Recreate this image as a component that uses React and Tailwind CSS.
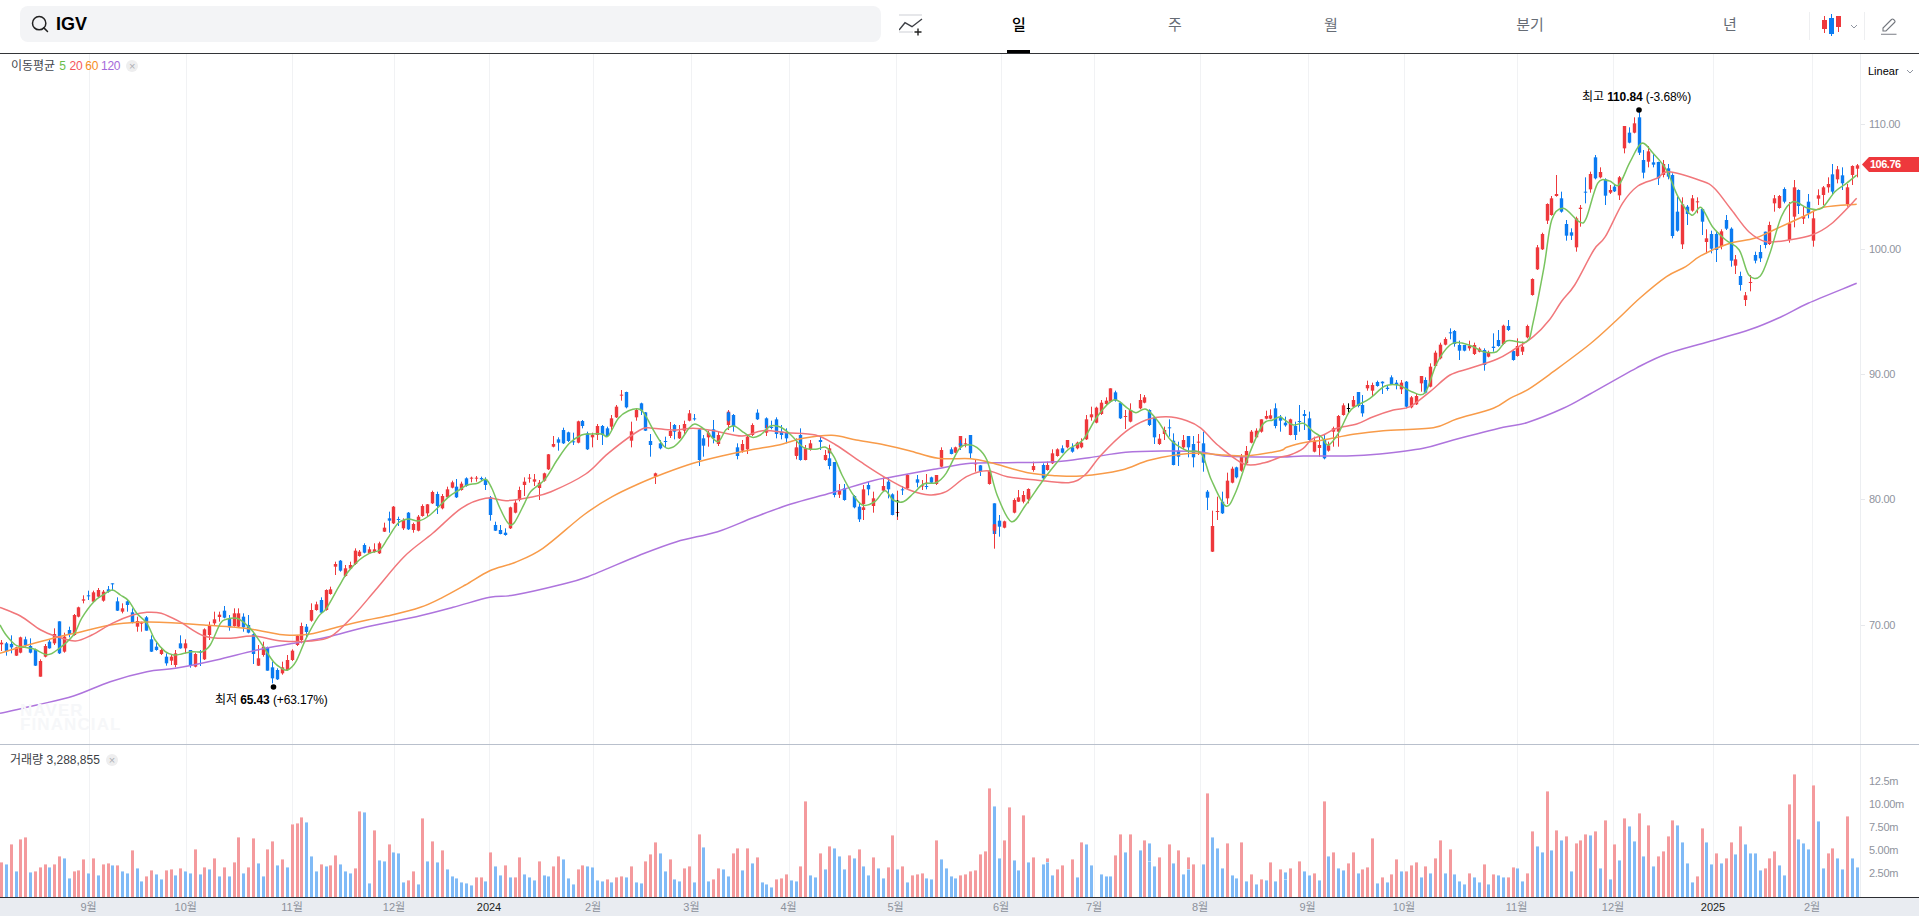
import { Search } from "lucide-react";

const PITCH = 4.845;
const LAST_X = 1856.6;
// snap a read x onto the candle grid
const snap = (x) => Math.round(LAST_X - PITCH * Math.round((LAST_X - x) / PITCH));

// [x, wickTop, bodyTop, bodyBottom, wickBottom, color] color: 1 red, 0 blue, 2 black
const CANDLES = [
  { x0: 0, sx: 2.45, y0: 360, rows: [
    [3,840,848,853,873,1],[15,846,850,874,887,0],[27,826,852,862,880,0],[38,860,862,887,888,1],[50,830,832,878,880,1],[62,830,838,855,860,0],[74,835,858,878,880,0],[86,866,870,917,918,0],[99,898,903,950,950,1],[111,852,858,890,892,1],[122,838,845,865,866,0],[133,805,822,850,855,1],[145,784,784,880,882,0],[157,818,830,875,878,1],[170,800,810,822,832,0],[182,762,765,825,827,1],[194,740,742,770,772,1],[205,706,718,722,730,1],[217,692,706,709,720,0],[229,692,697,725,726,1],[241,684,690,710,712,1],[253,690,695,722,725,1],[265,678,688,695,698,0],[277,670,670,673,692,0],[288,712,724,752,753,0],[300,730,745,755,760,1],[312,720,724,735,755,0],[324,745,757,788,790,0],[337,770,783,800,815,1],[349,785,788,790,815,1],[361,768,772,812,812,0],[371,826,838,875,876,0],[383,848,860,870,872,0],[395,865,870,882,885,1],[407,880,890,910,917,0],[420,885,890,902,915,1],[432,870,880,915,922,1],[444,826,850,865,866,0],[455,838,850,865,880,1],[467,870,870,915,923,0],[479,878,882,920,922,1],[491,870,875,878,918,0],[503,805,808,898,900,1],[515,785,795,825,840,1],[527,755,778,790,795,1],[538,755,764,771,785,1],[550,738,752,773,775,0],[562,765,775,802,812,0],[574,745,760,798,800,1],[586,745,760,800,802,1],[598,760,770,802,815,0],[610,765,795,818,820,0],[621,820,823,882,912,0],[633,855,895,917,918,1],[645,845,860,885,890,1],[657,860,862,932,932,0],[670,905,922,955,970,0],[682,925,930,958,960,0],[694,905,922,940,944,1],[704,885,900,930,932,1],[716,868,872,900,903,1],[729,825,828,855,858,1],[741,788,798,840,850,1],[753,792,800,816,832,0],[765,730,750,782,785,1],[777,725,733,750,752,1],[787,712,720,758,760,0],[799,688,690,750,752,1],[811,680,688,702,704,1],[824,605,612,620,645,1],[836,600,602,632,635,0],[849,615,625,648,650,1],[860,605,615,626,628,1],[871,565,572,612,615,1],[883,570,575,588,590,1],[895,550,555,578,580,0],[907,560,568,580,582,1],[919,550,568,576,578,1],[932,545,550,580,582,1],[944,488,503,515,516,1],[954,455,475,482,518,0],[966,438,440,490,492,1],[978,470,477,480,498,0],[990,475,480,505,510,1],[1003,456,458,508,510,0],[1015,488,492,510,518,1],[1027,465,470,512,514,1],[1037,433,438,468,470,1],[1050,432,433,460,470,1],[1062,392,396,430,432,1],[1074,395,402,438,462,0],[1086,402,408,445,448,1],[1098,380,388,412,415,1],[1110,362,367,383,385,1],[1120,357,380,412,414,0],[1133,365,371,390,392,1],[1145,352,355,378,380,0],[1157,350,353,356,367,1],[1170,348,353,356,365,1],[1182,350,354,358,362,0],[1194,352,358,375,390,0],[1204,408,412,465,482,0],[1216,485,495,512,513,0],[1229,495,510,522,523,0],[1241,505,518,525,527,0],[1253,440,442,505,507,1],[1265,420,428,458,460,1],[1277,380,390,420,424,1],[1287,352,365,375,408,1],[1299,342,353,356,368,1],[1312,342,358,365,378,1],[1324,360,368,384,420,1],[1336,338,340,362,365,1],[1348,282,283,328,330,1],[1360,228,252,260,262,1],[1370,232,238,248,272,0],[1383,203,210,250,252,0],[1395,215,217,243,246,0],[1407,218,244,247,255,0],[1419,182,184,248,250,1],[1431,180,183,198,205,0],[1443,215,220,268,270,0],[1454,218,225,232,262,1],[1466,192,198,225,240,1],[1478,195,198,225,255,0],[1490,200,205,228,230,0],[1502,165,175,200,210,1],[1514,135,140,172,174,1],[1527,90,104,107,122,1],[1537,95,96,142,145,0],[1550,185,214,242,262,1],[1562,145,150,172,182,1],
  ] },
  { x0: 640, sx: 2.45, y0: 360, rows: [
    [5,128,130,152,165,0],[17,156,157,212,213,0],[30,222,243,255,290,0],[42,338,340,350,372,1],[53,240,250,265,268,0],[65,230,243,246,262,0],[77,186,213,228,234,1],[89,192,195,215,238,0],[101,195,215,235,237,1],[113,182,192,212,222,1],[125,150,160,182,184,1],[136,162,175,178,182,0],[148,205,208,300,318,0],[160,225,235,257,290,0],[172,212,218,232,260,1],[185,180,208,235,250,0],[197,215,225,252,258,1],[209,150,155,195,210,1],[219,155,158,182,185,0],[231,162,165,198,215,0],[243,250,262,288,298,0],[256,240,252,272,278,1],[268,225,230,268,282,1],[280,190,195,225,228,1],[292,148,158,178,180,0],[304,172,175,205,212,0],[314,195,208,218,228,1],[327,182,201,204,208,0],[339,172,178,222,235,0],[351,195,215,225,238,0],[363,205,218,235,250,0],[376,262,265,288,298,1],[386,235,262,285,288,1],[398,205,225,300,302,0],[410,255,265,300,301,1],[422,240,250,268,272,1],[435,228,240,246,270,0],[447,270,285,300,302,1],[459,254,265,280,290,1],[469,278,295,318,328,0],[481,306,306,405,412,0],[493,372,392,404,414,1],[505,372,385,420,422,0],[518,405,408,442,445,0],[530,430,440,478,486,0],[542,430,442,450,480,1],[552,375,388,432,434,1],[564,365,375,388,406,0],[576,395,415,438,458,1],[589,352,378,392,395,1],[601,352,365,388,415,0],[613,400,403,465,466,0],[625,392,456,458,480,1],[636,420,422,426,470,2],[648,378,388,390,405,0],[660,342,345,385,388,1],[672,345,358,368,382,0],[685,360,376,378,390,1],[697,368,378,380,388,0],[707,342,368,371,372,1],[719,350,352,368,370,0],[731,345,345,372,375,1],[743,262,270,320,322,1],[755,262,268,282,283,0],[768,260,262,278,279,1],[780,228,228,262,265,1],[790,240,250,256,270,0],[802,235,250,252,262,1],[814,225,225,280,295,0],[826,298,310,312,335,1],[838,315,316,335,348,0],[851,330,332,372,374,1],[863,430,430,522,526,0],[873,492,493,512,566,1],[885,465,482,500,530,0],[897,482,484,503,505,1],[910,415,420,458,460,1],[922,390,412,425,426,1],[934,393,405,425,430,1],[946,392,397,418,420,1],[956,385,387,415,430,1],[968,305,318,330,335,1],[981,310,315,355,358,0],[993,305,315,330,332,1],[1005,268,280,310,312,1],[1017,265,268,288,290,1],[1030,256,265,278,280,0],[1040,240,240,262,265,1],[1052,250,262,275,278,0],[1064,245,248,265,268,1],[1076,235,248,262,265,1],[1089,165,178,238,240,1],[1101,140,163,172,182,1],[1113,140,143,188,190,1],[1123,120,128,162,165,1],[1135,112,122,132,135,1],[1147,85,85,125,127,1],[1160,92,97,122,125,0],[1172,125,128,175,177,0],[1184,150,168,170,207,1],[1196,135,158,182,185,0],[1206,130,150,185,187,1],[1218,102,120,145,148,1],[1231,105,112,128,130,1],[1243,148,150,195,198,0],[1256,170,172,232,252,0],[1268,222,236,252,255,1],[1280,200,210,222,240,1],[1290,178,202,205,230,0],[1302,220,242,315,316,0],[1314,245,272,290,318,0],[1327,225,240,262,268,1],[1339,228,228,262,292,0],[1351,228,252,292,322,0],[1363,222,245,248,285,1],[1373,215,250,308,335,0],[1385,390,395,413,450,0],[1397,452,498,575,576,1],[1410,410,453,456,480,1],[1422,395,425,460,462,0],[1434,338,362,415,432,1],[1446,320,326,368,370,1],[1457,320,322,352,355,0],[1469,282,290,332,335,1],[1481,258,273,310,315,1],[1493,210,215,248,250,1],[1505,205,212,232,234,1],[1517,178,178,215,218,1],[1530,152,168,176,178,1],[1540,148,166,176,178,1],[1552,130,145,198,205,0],[1564,165,172,182,215,0],
  ] },
  { x0: 1270, sx: 3, y0: 320, rows: [
    [40,290,308,316,320,0],[55,296,298,345,346,1],[70,305,318,345,360,0],[85,255,303,305,335,0],[98,270,282,288,330,0],[113,275,295,360,362,0],[127,350,362,395,397,1],[142,350,375,384,410,1],[157,345,358,415,418,0],[172,365,376,392,395,1],[187,320,325,335,380,1],[199,285,288,335,380,1],[214,250,256,285,287,1],[229,250,264,266,280,2],[244,228,240,260,262,1],[259,216,216,258,262,0],[274,225,255,280,290,0],[289,182,195,205,212,1],[301,188,195,212,228,1],[316,182,186,198,200,0],[331,184,185,190,222,0],[346,195,203,207,212,0],[361,166,172,192,195,0],[376,180,188,195,208,0],[391,180,188,208,222,1],[403,183,185,260,265,0],[418,228,232,262,265,1],[433,222,228,253,255,1],[448,168,168,190,215,1],[463,172,180,218,220,0],[478,130,140,200,202,1],[493,92,98,138,140,1],[505,68,74,115,118,1],[520,52,57,74,76,1],[535,25,37,40,58,0],[550,30,33,72,80,0],[565,62,75,92,120,0],[580,75,75,92,94,0],[595,62,78,85,92,1],[607,68,75,102,105,1],[622,82,86,95,97,1],[637,85,90,135,152,0],[652,92,98,110,112,1],[667,40,80,84,95,0],[682,30,60,78,80,0],[697,14,17,72,75,1],[709,0,18,30,33,0],[724,88,93,120,122,0],[739,55,78,108,110,1],[754,65,80,95,105,1],[769,14,18,52,55,1],
  ] },
  { x0: 1280, sx: 2.613, y0: 90, rows: [
    [657,565,567,615,617,1],[670,465,472,538,540,1],[681,428,432,478,480,1],[694,340,342,392,402,1],[707,318,325,375,377,1],[719,255,312,318,320,1],[733,305,325,365,368,0],[746,390,402,437,452,0],[759,415,427,437,450,0],[770,380,385,472,485,1],[783,345,353,357,410,1],[796,262,305,308,340,0],[809,245,252,298,308,1],[821,195,202,265,268,0],[834,232,246,262,265,1],[847,265,268,317,345,0],[858,285,300,308,312,1],[871,285,290,304,306,0],[885,258,262,316,330,1],[897,108,108,175,190,1],[911,112,128,158,160,0],[924,82,100,128,130,1],[937,55,82,188,195,0],[947,180,210,248,265,0],[960,168,184,215,232,1],[973,192,217,224,232,0],[986,215,216,265,285,0],[999,210,222,255,262,1],[1012,222,235,260,268,0],[1025,250,255,438,445,0],[1036,320,365,422,425,0],[1049,322,343,463,477,1],[1062,345,350,372,405,0],[1075,315,325,362,365,1],[1088,322,334,336,370,1],[1101,355,357,395,435,0],[1115,418,445,456,490,1],[1126,422,432,476,490,0],[1138,425,432,480,516,0],[1151,418,424,468,478,1],[1164,375,390,416,420,0],[1177,412,416,512,530,0],[1190,495,508,527,552,1],[1203,545,558,585,602,0],[1215,606,616,630,648,1],[1226,555,576,578,604,1],[1240,485,495,512,520,0],[1253,465,486,505,516,0],[1266,425,425,465,475,0],[1279,395,405,462,465,1],[1291,315,325,340,365,1],[1304,315,318,354,356,1],[1316,292,297,335,340,0],[1329,336,400,450,458,1],[1342,270,292,380,412,1],[1355,298,300,348,372,0],[1368,350,378,386,402,1],[1381,312,335,370,385,0],[1392,362,385,452,470,1],[1405,298,316,326,345,1],[1418,288,292,315,345,1],[1431,262,282,292,308,1],[1444,222,253,305,312,0],[1457,228,238,268,280,1],[1470,232,256,280,300,0],[1480,282,292,342,350,1],[1494,226,228,255,285,1],[1507,222,226,236,262,1],
  ] },
];

// [x, top, color] read off the volume pane, y = 580 + top / 3
const VOLUME = [
  { x0: 0, rows: [
    [0,845,1],[13,853,0],[25,793,1],[37,874,0],[50,778,1],[62,772,1],[74,877,0],[84,874,1],[96,862,1],[109,853,1],[121,862,0],[133,853,1],[145,829,1],[157,835,0],[168,895,0],[180,874,1],[192,871,1],[204,838,1],[216,880,0],[229,835,1],[241,886,0],[252,853,1],[264,850,1],[276,856,0],[288,856,1],[300,874,0],[312,880,0],[324,811,1],[335,865,0],[347,904,0],[359,889,1],[371,871,1],[383,883,0],[395,898,0],[407,871,1],[418,868,1],[430,886,0],[442,865,1],[454,874,0],[466,880,0],[479,808,1],[491,883,0],[501,862,1],[513,868,0],[525,835,1],[537,889,0],[550,862,1],[561,889,0],[574,847,1],[584,772,1],[596,880,0],[608,862,1],[620,775,1],[633,850,0],[645,889,0],[657,808,1],[668,784,1],[680,856,0],[692,838,1],[704,862,0],[717,733,1],[729,730,1],[741,712,1],[751,727,0],[763,829,0],[775,874,0],[787,853,1],[799,859,0],[811,856,1],[823,826,1],[835,853,0],[847,874,0],[858,880,0],[871,865,1],[884,694,1],[895,697,0],[907,910,0],[917,751,1],[929,841,0],[941,844,0],[954,793,1],[966,817,0],[978,820,0],[990,907,0],[1001,901,1],[1013,874,1],[1025,913,0],[1037,715,1],[1050,844,0],[1062,784,1],[1074,847,0],[1084,811,1],[1096,868,0],[1108,889,0],[1120,895,0],[1132,907,0],[1145,910,0],[1157,916,0],[1168,892,1],[1180,892,1],[1192,904,0],[1204,817,1],[1216,859,0],[1229,886,0],[1241,856,1],[1251,892,0],[1263,892,1],[1276,832,1],[1288,883,0],[1300,892,0],[1312,901,0],[1324,844,1],[1334,886,0],[1346,889,0],[1358,859,1],[1370,829,1],[1383,838,0],[1395,895,0],[1407,913,0],[1418,868,1],[1430,856,1],[1442,859,0],[1454,862,0],[1466,901,0],[1478,904,0],[1490,898,1],[1500,907,0],[1513,892,1],[1525,889,1],[1537,892,0],[1550,859,1],[1562,907,0],
  ] },
  { x0: 640, rows: [
    [5,910,0],[16,844,1],[28,823,1],[40,787,1],[52,820,0],[65,874,0],[77,838,1],[89,898,0],[100,904,0],[112,865,1],[124,859,1],[136,907,0],[148,763,1],[160,802,0],[172,904,0],[183,898,1],[195,865,1],[207,868,0],[219,889,0],[231,820,1],[243,805,1],[255,871,0],[266,805,1],[278,850,0],[290,832,1],[302,907,0],[314,913,0],[326,922,0],[339,898,1],[349,895,1],[361,883,1],[373,901,0],[385,904,0],[397,859,1],[410,664,1],[422,886,0],[432,892,0],[444,820,1],[456,868,0],[469,799,1],[481,805,0],[493,829,0],[503,868,0],[515,826,1],[527,835,0],[540,808,1],[552,859,0],[564,886,0],[576,832,1],[586,865,0],[598,895,0],[611,862,1],[623,766,1],[635,868,0],[647,859,1],[660,907,0],[670,886,1],[682,883,1],[694,880,1],[706,895,0],[718,898,0],[731,781,1],[743,838,0],[753,865,0],[765,889,0],[777,895,0],[789,886,1],[801,883,1],[814,874,1],[826,871,1],[836,823,1],[848,814,1],[860,625,1],[873,679,0],[885,835,0],[897,781,1],[909,682,1],[919,841,0],[932,871,0],[944,706,1],[956,847,0],[968,832,1],[981,853,0],[993,835,1],[1003,847,0],[1015,886,0],[1027,868,1],[1039,856,1],[1052,838,1],[1064,892,0],[1076,907,0],[1086,787,1],[1098,793,0],[1110,856,0],[1123,883,0],[1135,889,0],[1147,889,0],[1160,850,1],[1170,826,1],[1182,763,1],[1194,817,0],[1206,763,1],[1218,811,0],[1231,781,1],[1243,790,0],[1253,844,0],[1265,859,0],[1277,832,1],[1290,793,1],[1302,850,0],[1314,811,1],[1327,883,0],[1337,832,1],[1348,868,0],[1360,853,1],[1373,853,0],[1385,640,1],[1397,772,0],[1410,805,0],[1420,865,0],[1432,790,1],[1444,886,0],[1456,895,0],[1468,787,1],[1480,904,0],[1493,883,1],[1503,913,0],[1515,898,1],[1527,901,0],[1539,847,1],[1552,904,0],[1564,868,1],
  ] },
  { x0: 1279, rows: [
    [10,877,0],[20,898,0],[32,865,1],[45,844,1],[57,874,0],[69,886,0],[81,880,1],[94,901,0],[104,664,1],[116,829,0],[128,817,1],[140,865,0],[153,871,0],[165,850,1],[177,817,1],[187,880,0],[199,868,1],[212,862,1],[224,775,1],[236,910,0],[248,892,1],[260,907,0],[270,883,1],[283,838,1],[295,874,0],[307,874,1],[319,856,1],[331,847,1],[344,892,0],[353,859,1],[366,880,0],[378,835,1],[390,781,1],[402,880,0],[415,808,1],[427,883,0],[437,904,0],[449,913,0],[461,880,1],[473,892,0],[486,907,0],[498,853,1],[510,913,0],[520,883,1],[532,886,0],[545,892,0],[557,892,1],[569,862,1],[581,865,0],[593,904,0],[604,880,1],[616,754,1],[628,799,0],[640,817,0],[653,634,1],[665,811,0],[677,751,1],[687,781,0],[699,769,1],[711,874,0],[724,790,1],[736,781,1],[748,763,1],[760,766,0],[770,754,1],[782,865,0],[795,721,1],[807,898,0],[819,793,1],[831,841,0],[844,715,1],[853,739,0],[866,784,0],[878,700,1],[890,829,0],[902,736,1],[914,859,0],[927,829,1],[937,814,1],[949,769,1],[961,721,1],[973,736,0],[985,787,0],[998,850,0],[1010,907,0],[1020,889,1],[1032,745,1],[1044,787,0],[1056,853,0],[1069,820,1],[1081,850,0],[1093,835,1],[1103,787,1],[1115,823,0],[1128,739,1],[1140,793,0],[1152,820,0],[1164,820,0],[1177,871,0],[1187,865,1],[1199,835,1],[1211,814,1],[1223,856,0],[1236,886,0],[1248,673,1],[1257,583,1],[1270,778,0],[1282,790,0],[1294,808,0],[1306,616,1],[1319,724,0],[1331,865,0],[1341,820,1],[1353,805,1],[1365,835,0],[1378,868,0],[1390,709,1],[1402,835,0],[1415,862,0],
  ] },
];

// moving averages, read in pieces: [x0, sx, y0, points]
const MA = [
  { color: "#ae74dd", parts: [
    [0,2.45,360,[[0,1060],[90,1035],[180,1008],[270,965],[360,935],[430,925],[530,900],[630,870],[720,850],[800,832],[900,800],[1020,770],[1110,742],[1200,712],[1260,705],[1370,675],[1440,650],[1568,585]]],
    [640,2.45,360,[[90,545],[190,515],[280,472],[370,432],[470,398],[570,362],[620,350],[720,328],[810,310],[900,308],[1020,305],[1100,293],[1190,277],[1280,273],[1370,275],[1430,288],[1568,291]]],
    [1270,3,320,[[100,408],[230,408],[330,402],[460,385],[550,360],[700,322],[770,308],[880,265],[960,222]]],
    [1280,2.613,90,[[930,835],[1010,792],[1120,755],[1230,718],[1310,680],[1380,640],[1507,580]]],
  ] },
  { color: "#f89b49", parts: [
    [0,2.45,360,[[0,880],[60,858],[130,835],[200,815],[270,795],[340,787],[420,788],[500,795],[600,805],[650,815],[700,825],[760,822],[830,800],[900,780],[960,765],[1030,742],[1080,715],[1140,675],[1200,632],[1260,608],[1330,565],[1430,465],[1500,410],[1568,370]]],
    [640,2.45,360,[[60,340],[130,310],[200,288],[270,270],[340,255],[400,235],[470,226],[530,240],[600,255],[660,272],[730,295],[810,296],[860,308],[950,338],[1020,347],[1080,348],[1180,330],[1250,300],[1350,280],[1430,285],[1490,287],[1568,272]]],
    [1270,3,320,[[50,382],[100,368],[160,360],[250,343],[340,332],[490,323],[560,297],[670,265],[720,235],[775,208],[850,155],[960,72]]],
    [1280,2.613,90,[[880,690],[940,625],[1010,560],[1060,530],[1100,497],[1170,462],[1240,445],[1290,420],[1370,378],[1420,352],[1507,343]]],
  ] },
  { color: "#f1777b", parts: [
    [0,2.45,360,[[0,742],[50,768],[100,810],[140,830],[185,843],[225,825],[275,790],[325,765],[360,757],[395,760],[440,785],[500,828],[560,835],[620,828],[690,843],[760,843],[810,830],[860,775],[920,690],[990,590],[1060,520],[1130,445],[1190,415],[1240,422],[1300,412],[1350,395],[1435,342],[1490,280],[1568,210]]],
    [640,2.45,360,[[30,205],[80,210],[130,205],[180,212],[250,228],[300,212],[360,218],[430,225],[480,255],[540,305],[600,352],[660,390],[710,405],[750,395],[800,350],[850,332],[900,350],[970,360],[1050,368],[1090,345],[1130,285],[1190,215],[1240,180],[1290,170],[1340,182],[1375,205],[1415,255],[1480,312],[1530,308],[1568,292]]],
    [1270,3,320,[[60,405],[100,385],[125,358],[160,345],[200,325],[260,312],[310,290],[370,270],[420,260],[480,215],[540,165],[600,145],[680,118],[730,90],[790,50],[838,0]]],
    [1280,2.613,90,[[735,635],[770,585],[820,480],[850,440],[895,340],[935,288],[985,265],[1015,245],[1100,272],[1135,295],[1180,360],[1225,425],[1270,455],[1330,450],[1390,435],[1440,402],[1507,325]]],
  ] },
  { color: "#79c45f", parts: [
    [0,2.45,360,[[0,795],[15,825],[38,855],[60,862],[85,868],[115,884],[140,870],[180,825],[200,775],[230,725],[255,703],[275,690],[295,705],[315,722],[335,760],[360,790],[380,840],[405,875],[425,885],[445,882],[470,875],[495,875],[515,855],[540,790],[555,778],[580,775],[600,790],[620,815],[645,860],[670,905],[690,925],[705,930],[725,905],[750,835],[780,770],[800,745],[830,680],[850,640],[880,600],[905,580],[930,570],[950,535],[975,490],[1000,477],[1025,483],[1050,468],[1075,440],[1100,410],[1125,390],[1145,375],[1170,370],[1190,358],[1205,385],[1225,445],[1245,490],[1260,488],[1285,430],[1300,395],[1335,358],[1365,300],[1395,250],[1425,225],[1450,222],[1475,222],[1490,228],[1515,175],[1540,152],[1568,148]]],
    [640,2.45,360,[[15,170],[35,215],[60,260],[80,262],[100,240],[120,205],[135,192],[160,210],[190,245],[210,210],[230,198],[255,218],[275,232],[295,225],[320,198],[345,202],[370,225],[400,262],[430,268],[455,262],[475,290],[495,345],[520,400],[545,435],[575,425],[600,392],[620,420],[645,425],[670,400],[695,372],[725,368],[750,340],[780,270],[800,255],[825,262],[850,300],[875,405],[910,485],[945,435],[985,365],[1020,310],[1050,268],[1085,240],[1120,170],[1160,120],[1195,145],[1215,158],[1240,148],[1270,185],[1300,240],[1340,272],[1375,280],[1400,360],[1435,438],[1460,395],[1490,290],[1525,195],[1550,180],[1568,170]]],
    [1270,3,320,[[40,297],[70,315],[100,310],[130,335],[155,352],[175,375],[205,340],[235,280],[255,260],[300,235],[345,198],[385,195],[425,215],[465,218],[500,130],[540,75],[570,68],[610,80],[640,95],[680,95],[712,62],[770,65],[790,5]]],
    [1280,2.613,90,[[690,530],[710,390],[740,355],[782,395],[800,385],[830,280],[860,272],[885,285],[915,215],[945,160],[975,190],[1010,240],[1040,320],[1075,375],[1100,352],[1130,410],[1165,450],[1200,480],[1225,555],[1255,558],[1280,490],[1310,380],[1340,335],[1380,355],[1415,355],[1450,305],[1480,280],[1507,255]]],
  ] },
];

const GRID_X = [88.6, 185.7, 292, 394, 489, 593, 691.4, 788.6, 895.5, 1001, 1094, 1200, 1307.6, 1404, 1516.6, 1613, 1713, 1812];
const MONTHS = ["9월", "10월", "11월", "12월", "2024", "2월", "3월", "4월", "5월", "6월", "7월", "8월", "9월", "10월", "11월", "12월", "2025", "2월"];
const PRICE_TICKS = [["110.00", 124.2], ["100.00", 249], ["90.00", 374], ["80.00", 499.3], ["70.00", 624.8]];
const VOL_TICKS = [["12.5m", 780.7], ["10.00m", 803.7], ["7.50m", 826.7], ["5.00m", 849.7], ["2.50m", 872.7]];
const TABS = ["일", "주", "월", "분기", "년"];

const CANDLE_FILL = { 0: "#0b7bf1", 1: "#ee383c", 2: "#000000" };

const flatCandles = CANDLES.flatMap((s) =>
  s.rows.map(([x, wt, bt, bb, wb, c]) => ({
    x: snap(s.x0 + x / s.sx),
    wt: s.y0 + wt / 3,
    bt: s.y0 + bt / 3,
    bb: s.y0 + bb / 3,
    wb: s.y0 + wb / 3,
    c,
  }))
);

const flatVolume = VOLUME.flatMap((s) =>
  s.rows.map(([x, top, c]) => ({ x: snap(s.x0 + x / 2.45), y: Math.round(580 + top / 3), c }))
);

// catmull-rom through the read points
function smoothPath(pts) {
  let d = `M${pts[0][0]} ${pts[0][1]}`;
  for (let i = 0; i < pts.length - 1; i++) {
    const p0 = pts[i - 1] || pts[i];
    const p1 = pts[i];
    const p2 = pts[i + 1];
    const p3 = pts[i + 2] || p2;
    const c1x = p1[0] + (p2[0] - p0[0]) / 6;
    const c1y = p1[1] + (p2[1] - p0[1]) / 6;
    const c2x = p2[0] - (p3[0] - p1[0]) / 6;
    const c2y = p2[1] - (p3[1] - p1[1]) / 6;
    d += `C${c1x.toFixed(1)} ${c1y.toFixed(1)} ${c2x.toFixed(1)} ${c2y.toFixed(1)} ${p2[0].toFixed(1)} ${p2[1].toFixed(1)}`;
  }
  return d;
}

const maPaths = MA.map((m) => ({
  color: m.color,
  d: smoothPath(
    m.parts.flatMap(([x0, sx, y0, pts]) => pts.map(([x, y]) => [x0 + x / sx, y0 + y / 3]))
  ),
}));

function GridLines({ y1, y2 }) {
  return (
    <>
      {GRID_X.map((x) => (
        <rect key={x} x={Math.round(x)} y={y1} width="1" height={y2 - y1} fill="#f1f2f4" />
      ))}
      <rect x="1860" y={y1} width="1" height={y2 - y1} fill="#eceef1" />
    </>
  );
}

function AddIndicatorIcon() {
  return (
    <svg width="24" height="24" viewBox="0 0 24 24" fill="none">
      <path d="M0 1h23" stroke="#d5d7dc" strokeWidth="1.2" />
      <path d="M0 18h14" stroke="#d5d7dc" strokeWidth="1.2" />
      <path d="M0 16l6-7.300 7 4 10-7.700" stroke="#3c3f45" strokeWidth="1.4" />
      <path d="M15.500 18h7M19 14.500v7" stroke="#222" strokeWidth="1.4" />
    </svg>
  );
}

function CandleTypeIcon() {
  return (
    <svg width="20" height="24" viewBox="0 0 20 24">
      <rect x="2" y="2" width="1" height="17" fill="#ee383c" />
      <rect x="0" y="6" width="5" height="9" fill="#ee383c" />
      <rect x="9" y="0" width="1" height="22" fill="#0b7bf1" />
      <rect x="7" y="4" width="5" height="16" fill="#0b7bf1" />
      <rect x="16" y="2" width="1" height="16" fill="#ee383c" />
      <rect x="14" y="2" width="5" height="11" fill="#ee383c" />
    </svg>
  );
}

function Chevron() {
  return (
    <svg width="8" height="5" viewBox="0 0 8 5" fill="none">
      <path d="M1 1l3 3 3-3" stroke="#8f95a0" strokeWidth="1" />
    </svg>
  );
}

function PencilIcon() {
  return (
    <svg width="16" height="17" viewBox="0 0 16 17" fill="none">
      <path d="M2 13v-3L10.500 1.500a1.500 1.500 0 0 1 2.100 0l.900.900a1.500 1.500 0 0 1 0 2.100L5 13z" stroke="#73777e" strokeWidth="1.100" />
      <path d="M0 16.300h15.500" stroke="#8f9299" strokeWidth="1.200" />
    </svg>
  );
}

function CloseChip() {
  return (
    <span className="ml-[6px] flex h-3 w-3 items-center justify-center rounded-full bg-[#eeeeef] text-[11px] leading-none text-[#adafb4]">
      ×
    </span>
  );
}

function AxisLabel({ y, offset, children }) {
  return (
    <span
      className="absolute left-[1869px] -translate-y-1/2 text-[11px] leading-none tracking-[-0.3px] text-[#8f949e]"
      style={{ top: y - offset }}
    >
      {children}
    </span>
  );
}

export default function App() {
  return (
    <div className="flex h-[916px] w-[1919px] flex-col overflow-hidden bg-white font-['Liberation_Sans','Noto_Sans_CJK_KR',sans-serif]">
      <header className="flex h-[54px] items-start border-b border-[#333538]">
        <div className="ml-5 mt-[6px] flex h-9 w-[861px] items-center rounded-lg bg-[#f3f4f6] pl-[10px]">
          <Search size={20} strokeWidth={1.8} color="#222" />
          <span className="ml-[6px] text-lg font-bold text-black">IGV</span>
        </div>
        <div className="ml-[18px] mt-[14px]">
          <AddIndicatorIcon />
        </div>
        <nav className="ml-[18px] grid h-[53px] grid-cols-[156px_156px_156px_242px_158px]">
          {TABS.map((t, i) => (
            <div
              key={t}
              className={`relative flex items-center justify-center pb-[3px] text-[15px] ${
                i === 0 ? "font-medium text-black" : "text-[#666c75]"
              }`}
            >
              {t}
              {i === 0 && <span className="absolute bottom-0 left-[66px] h-[3px] w-[23px] bg-black" />}
            </div>
          ))}
        </nav>
        <div className="mt-3 flex h-7 w-[55px] items-center border-l border-[#eeeff1] pl-3">
          <CandleTypeIcon />
          <span className="ml-[8px]">
            <Chevron />
          </span>
        </div>
        <div className="mt-3 flex h-7 items-center border-l border-[#eeeff1] pl-4">
          <PencilIcon />
        </div>
      </header>

      <section className="relative h-[691px] border-b border-[#b9c0cc]">
        <svg className="absolute inset-0" width="1919" height="690" viewBox="0 54 1919 690">
          <GridLines y1={54} y2={744} />
          {PRICE_TICKS.map(([l, y]) => (
            <rect key={l} x="1861" y={Math.round(y)} width="4" height="1" fill="#e6e8ec" />
          ))}
          {flatCandles.map((c, i) => (
            <g key={i} fill={CANDLE_FILL[c.c]}>
              <rect x={c.x} y={c.wt} width="1" height={c.wb - c.wt} />
              <rect x={c.x - 1.2} y={c.bt} width="3.4" height={Math.max(c.bb - c.bt, 1)} />
            </g>
          ))}
          {maPaths.map((m) => (
            <path key={m.color} d={m.d} fill="none" stroke={m.color} strokeWidth="1.5" strokeLinejoin="round" />
          ))}
          <circle cx="1639" cy="110" r="2.800" fill="#000" />
          <circle cx="273.500" cy="687" r="2.800" fill="#000" />
        </svg>

        <div className="absolute left-[11px] top-[6px] flex h-3 items-center text-xs leading-none">
          <span className="text-[#43474e]">이동평균</span>
          <span className="ml-[4px] tracking-[-0.3px] text-[#69bd4a]">5</span>
          <span className="ml-[4px] tracking-[-0.3px] text-[#f4555c]">20</span>
          <span className="ml-[3px] tracking-[-0.3px] text-[#f68e23]">60</span>
          <span className="ml-[3px] tracking-[-0.3px] text-[#a569d9]">120</span>
          <CloseChip />
        </div>

        <div className="absolute left-[20px] top-[650px] text-[17px] font-bold leading-[14px] tracking-[1.1px] text-[#f6f7f9]">
          NAVER
          <br />
          FINANCIAL
        </div>

        <span className="absolute left-[1582px] top-[36px] text-xs leading-[14px] tracking-[-0.1px] text-black">
          최고 <b className="font-bold">110.84</b> (-3.68%)
        </span>
        <span className="absolute left-[215px] top-[639px] text-xs leading-[14px] tracking-[-0.1px] text-black">
          최저 <b className="font-bold">65.43</b> (+63.17%)
        </span>

        <div className="absolute left-[1868px] top-[11px] flex items-center text-[11px] leading-3 text-black">
          Linear
          <span className="ml-[7px]">
            <Chevron />
          </span>
        </div>

        {PRICE_TICKS.map(([l, y]) => (
          <AxisLabel key={l} y={y} offset={54}>
            {l}
          </AxisLabel>
        ))}

        <div className="absolute left-[1862px] top-[103px] flex h-[15px] w-[57px] items-center bg-[#ee383c] [clip-path:polygon(7px_0,100%_0,100%_100%,7px_100%,0_50%)]">
          <span className="ml-2 text-[11px] font-bold leading-none tracking-[-0.5px] text-white">106.76</span>
        </div>
      </section>

      <section className="relative h-[153px] border-b border-[#2c2e32]">
        <svg className="absolute inset-0" width="1919" height="152" viewBox="0 745 1919 152">
          <GridLines y1={745} y2={897} />
          {flatVolume.map((v, i) => (
            <g key={i}>
              <rect x={v.x - 1} y={v.y} width="3" height={897 - v.y} fill={v.c ? "#f49a9d" : "#80baf6"} />
              <rect x={v.x - 1} y={v.y} width="3" height="1" fill={v.c ? "#f9c3c4" : "#b6d8fa"} />
            </g>
          ))}
        </svg>
        <div className="absolute left-[10px] top-[9px] flex h-3 items-center text-xs leading-none text-[#3b3e44]">
          거래량 3,288,855
          <CloseChip />
        </div>
        {VOL_TICKS.map(([l, y]) => (
          <AxisLabel key={l} y={y} offset={745}>
            {l}
          </AxisLabel>
        ))}
      </section>

      <footer className="relative h-[18px] bg-[#e9ecf1]">
        {MONTHS.map((m, i) => (
          <span
            key={i}
            className={`absolute top-[3px] -translate-x-1/2 text-[11px] leading-3 ${
              m.length === 4 ? "text-[#1d1f23]" : "text-[#8c919b]"
            }`}
            style={{ left: GRID_X[i] }}
          >
            {m}
          </span>
        ))}
      </footer>
    </div>
  );
}
